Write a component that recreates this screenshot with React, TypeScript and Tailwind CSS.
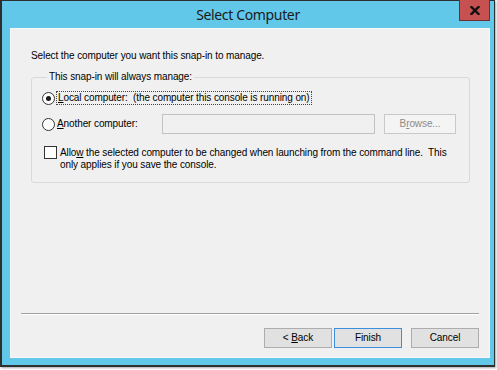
import React from "react";

const font = { fontFamily: '"Liberation Sans", Arial, sans-serif' };

function Radio({ checked }: { checked?: boolean }) {
  return (
    <span className="w-[13px] h-[13px] rounded-full border border-[#333333] bg-white flex items-center justify-center shrink-0">
      {checked && <span className="w-[5px] h-[5px] rounded-full bg-[#1a1a1a]" />}
    </span>
  );
}

function Btn({ children, primary }: { children: React.ReactNode; primary?: boolean }) {
  return (
    <div
      className={
        "w-[68px] h-[20px] flex items-center justify-center text-black bg-[#e1e1e1] border " +
        (primary ? "border-[#3c8fdc]" : "border-[#adadad]")
      }
    >
      <span>{children}</span>
    </div>
  );
}

export default function App() {
  return (
    <div className="w-[497px] h-[370px] bg-white" style={font}>
      <div className="w-[495px] h-[367px] bg-[#62c8ea] border border-[#2f2f2f] border-l-2 border-b-2 flex flex-col shadow-[1px_1px_2px_rgba(0,0,0,0.35)]">
        {/* Title bar */}
        <div className="h-[27px] flex relative">
          <div className="flex-1 flex items-center justify-center pb-[1px]">
            <span
              className="text-[14px] tracking-[-0.35px] text-[#1a1a1a]"
              style={{ fontFamily: '"Noto Sans", "Open Sans", sans-serif' }}
            >
              Select Computer
            </span>
          </div>
          <div className="absolute right-[4px] top-[-1px] w-[31px] h-[21px] bg-[#c75050] border border-[#6b3030] border-t-0 flex items-center justify-center">
            <svg width="10" height="9" viewBox="0 0 10 9">
              <path d="M1.5 1 L8.5 8 M8.5 1 L1.5 8" stroke="#111" strokeWidth="2.4" strokeLinecap="square" />
            </svg>
          </div>
        </div>
        {/* Content */}
        <div className="ml-[8px] mr-[4px] mb-[7px] flex-1 bg-[#f0f0f0] border border-[#f7f7f7] flex flex-col text-[10px] leading-[12px] tracking-[-0.1px] text-black">
          <div className="pl-[20px] pt-[21px]">Select the computer you want this snap-in to manage.</div>
          <fieldset className="min-w-0 ml-[20px] mr-[19px] mt-[9px] border border-[#d9d9d9] rounded-[3px] pl-[10px] pb-[11px]">
            <legend className="ml-[5px] px-[2px]">This snap-in will always manage:</legend>
            <div className="mt-[7px] h-[16px] flex items-center">
              <Radio checked />
              <span className="ml-[1px] px-[1px] border border-dotted border-[#444]">
                <span className="underline">L</span>ocal computer:&nbsp; (the computer this console is running on)
              </span>
            </div>
            <div className="mt-[8px] h-[20px] flex items-center">
              <div className="w-[120px] flex items-center">
                <Radio />
                <span className="ml-[2px]">
                  <span className="underline">A</span>nother computer:
                </span>
              </div>
              <div className="w-[213px] h-[20px] border border-[#c2c2c2] bg-[#f0f0f0]" />
              <div className="ml-[9px] w-[72px] h-[20px] border border-[#c9c9c9] bg-[#f4f4f4] flex items-center justify-center text-[#8a8a8a]">
                <span>
                  B<span className="underline">r</span>owse...
                </span>
              </div>
            </div>
            <div className="mt-[12px] ml-[2px] flex items-start">
              <span className="w-[13px] h-[13px] border border-[#333333] bg-white shrink-0" />
              <div className="ml-[3px] pt-[1px]">
                <div className="whitespace-pre">
                  Allo<span className="underline">w</span> the selected computer to be changed when launching from the command line.  This
                </div>
                <div className="whitespace-pre">only applies if you save the console.</div>
              </div>
            </div>
          </fieldset>
          <div className="flex-1" />
          <div className="ml-[10px] mr-[10px] h-[1px] bg-[#a0a0a0] border-b border-white box-content" />
          <div className="mt-[13px] mb-[9px] mr-[10px] flex justify-end">
            <Btn>
              &lt; <span className="underline">B</span>ack
            </Btn>
            <div className="ml-[2px]">
              <Btn primary>Finish</Btn>
            </div>
            <div className="ml-[9px]">
              <Btn>Cancel</Btn>
            </div>
          </div>
        </div>
      </div>
    </div>
  );
}
